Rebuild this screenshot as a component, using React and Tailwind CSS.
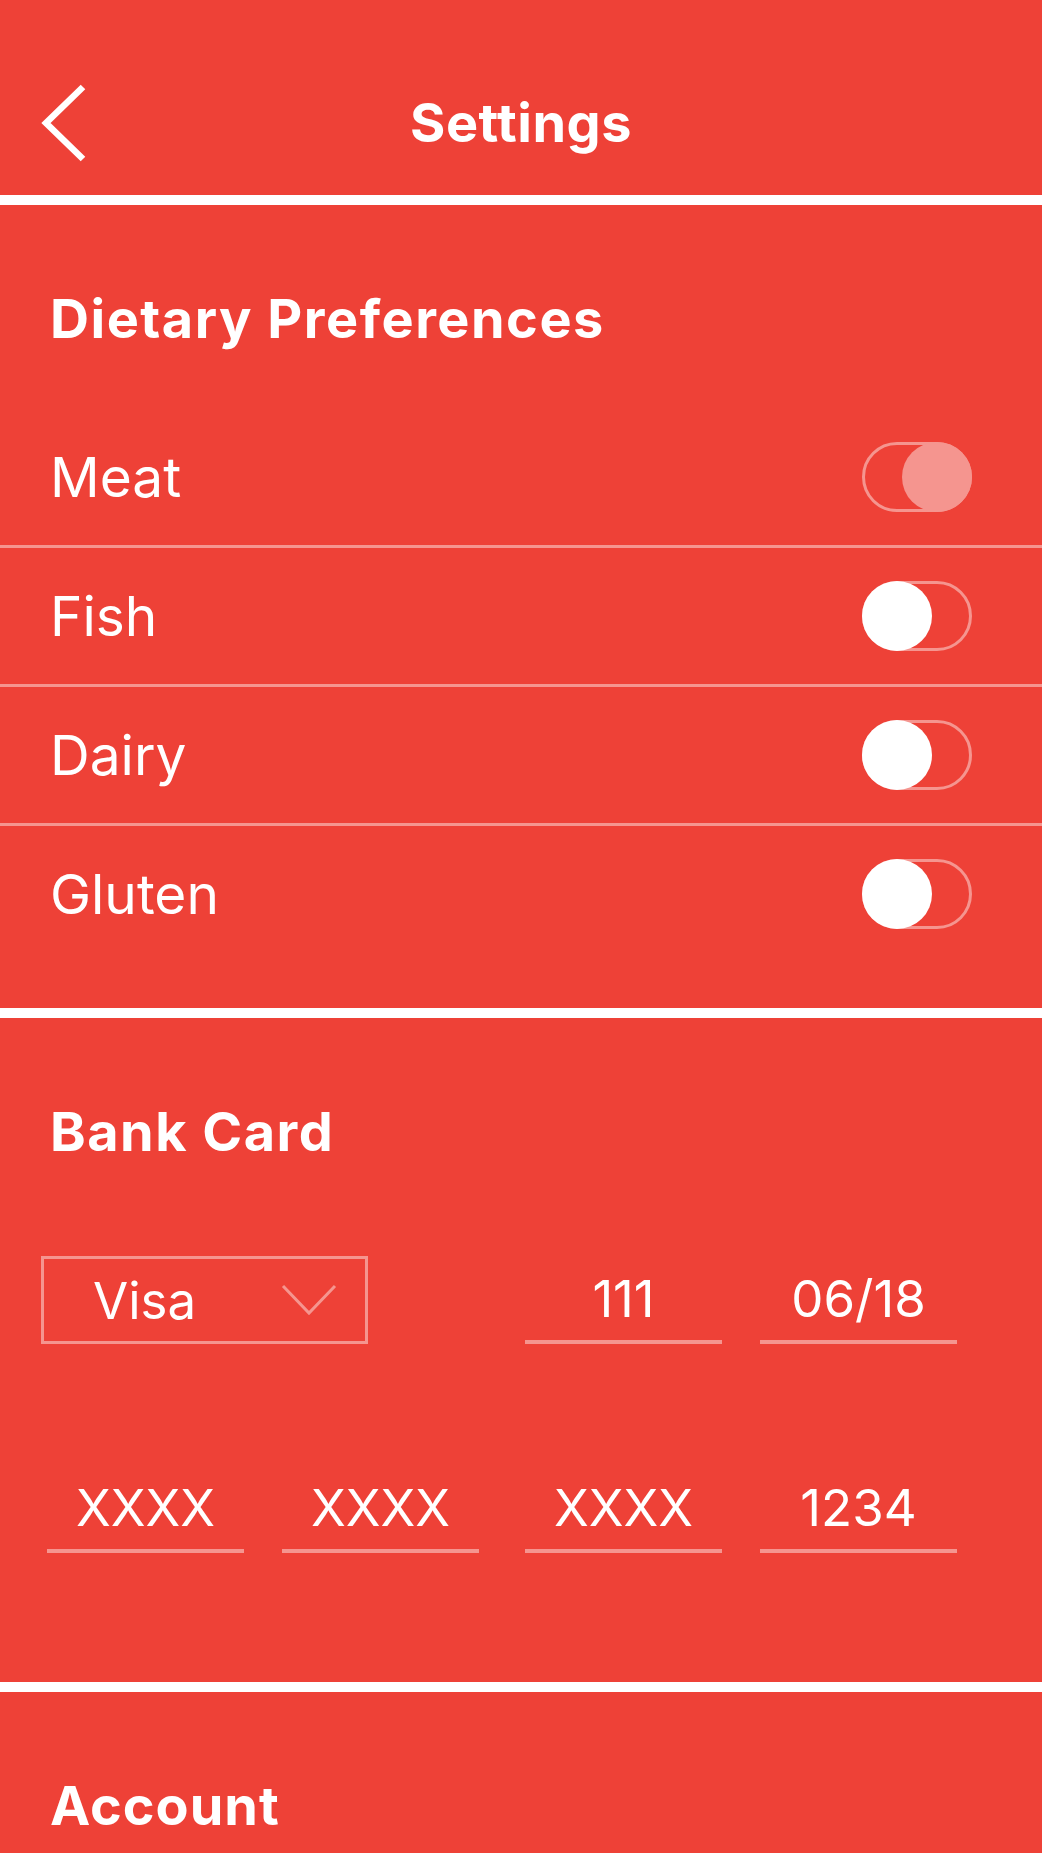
import { useState } from "react";

const PINK = "#f5958f";

const dietItems = [
  { key: "meat", label: "Meat", on: true },
  { key: "fish", label: "Fish", on: false },
  { key: "dairy", label: "Dairy", on: false },
  { key: "gluten", label: "Gluten", on: false },
];

function Toggle({ on, onClick }) {
  return (
    <button
      onClick={onClick}
      className={`flex h-[70px] w-[110px] items-center rounded-full border-[3px] border-[#f5958f] ${
        on ? "justify-end" : "justify-start"
      }`}
    >
      <span
        className={`-m-[3px] h-[70px] w-[70px] rounded-full ${on ? "bg-[#f5958f]" : "bg-white"}`}
      />
    </button>
  );
}

function Field({ value }) {
  return (
    <div className="flex h-[88px] items-center justify-center border-b-4 border-[#f5958f] text-[51px] leading-none text-white">
      {value}
    </div>
  );
}

export default function App() {
  const [diet, setDiet] = useState(
    Object.fromEntries(dietItems.map((d) => [d.key, d.on]))
  );

  return (
    <div className="min-h-screen bg-[#ee4137] font-['Inter',sans-serif] text-white">
      {/* header */}
      <div className="pt-[50px]">
        <div className="grid h-[145px] grid-cols-[1fr_auto_1fr] items-center">
          <button className="pl-[40px]">
            <svg width="48" height="80" viewBox="0 0 48 80" fill="none">
              <polyline
                points="43,4 6,40 43,76"
                stroke="white"
                strokeWidth="6.5"
                strokeLinejoin="miter"
              />
            </svg>
          </button>
          <h1 className="text-[54px] font-bold leading-[64px] tracking-[0.5px]">Settings</h1>
          <div />
        </div>
      </div>
      <div className="h-[10px] bg-white" />

      {/* dietary preferences */}
      <section className="pt-[82px] pb-[46px]">
        <h2 className="mb-[58px] pl-[50px] text-[54px] font-bold leading-[64px] tracking-[1.5px]">
          Dietary Preferences
        </h2>
        {dietItems.map((item, i) => (
          <div key={item.key}>
            {i > 0 && <div className="h-[3px] bg-[#f5958f]" />}
            <div className="flex h-[136px] items-center justify-between pl-[50px] pr-[70px]">
              <span className="text-[55px] leading-[64px]">{item.label}</span>
              <Toggle
                on={diet[item.key]}
                onClick={() => setDiet({ ...diet, [item.key]: !diet[item.key] })}
              />
            </div>
          </div>
        ))}
      </section>
      <div className="h-[10px] bg-white" />

      {/* bank card */}
      <section className="pt-[82px] pb-[129px]">
        <h2 className="pl-[50px] text-[54px] font-bold leading-[64px] tracking-[1.5px]">
          Bank Card
        </h2>
        <div className="mt-[92px] grid grid-cols-2 gap-x-[46px] gap-y-[121px] pl-[47px] pr-[85px]">
          <div className="grid grid-cols-2 gap-x-[38px]">
            <div className="-ml-[6px] col-span-2 flex h-[88px] w-[327px] items-center justify-between border-[3px] border-[#f5958f] pl-[49px] pr-[28px]">
              <span className="text-[51px] leading-none">Visa</span>
              <svg width="56" height="32" viewBox="0 0 56 32" fill="none">
                <polyline points="2,2 28,29 54,2" stroke={PINK} strokeWidth="3" />
              </svg>
            </div>
          </div>
          <div className="grid grid-cols-2 gap-x-[38px]">
            <Field value="111" />
            <Field value="06/18" />
          </div>
          <div className="grid grid-cols-2 gap-x-[38px]">
            <Field value="XXXX" />
            <Field value="XXXX" />
          </div>
          <div className="grid grid-cols-2 gap-x-[38px]">
            <Field value="XXXX" />
            <Field value="1234" />
          </div>
        </div>
      </section>
      <div className="h-[10px] bg-white" />

      {/* account */}
      <section className="pt-[82px] pb-[40px]">
        <h2 className="pl-[50px] text-[54px] font-bold leading-[64px] tracking-[1px]">
          Account
        </h2>
      </section>
    </div>
  );
}
